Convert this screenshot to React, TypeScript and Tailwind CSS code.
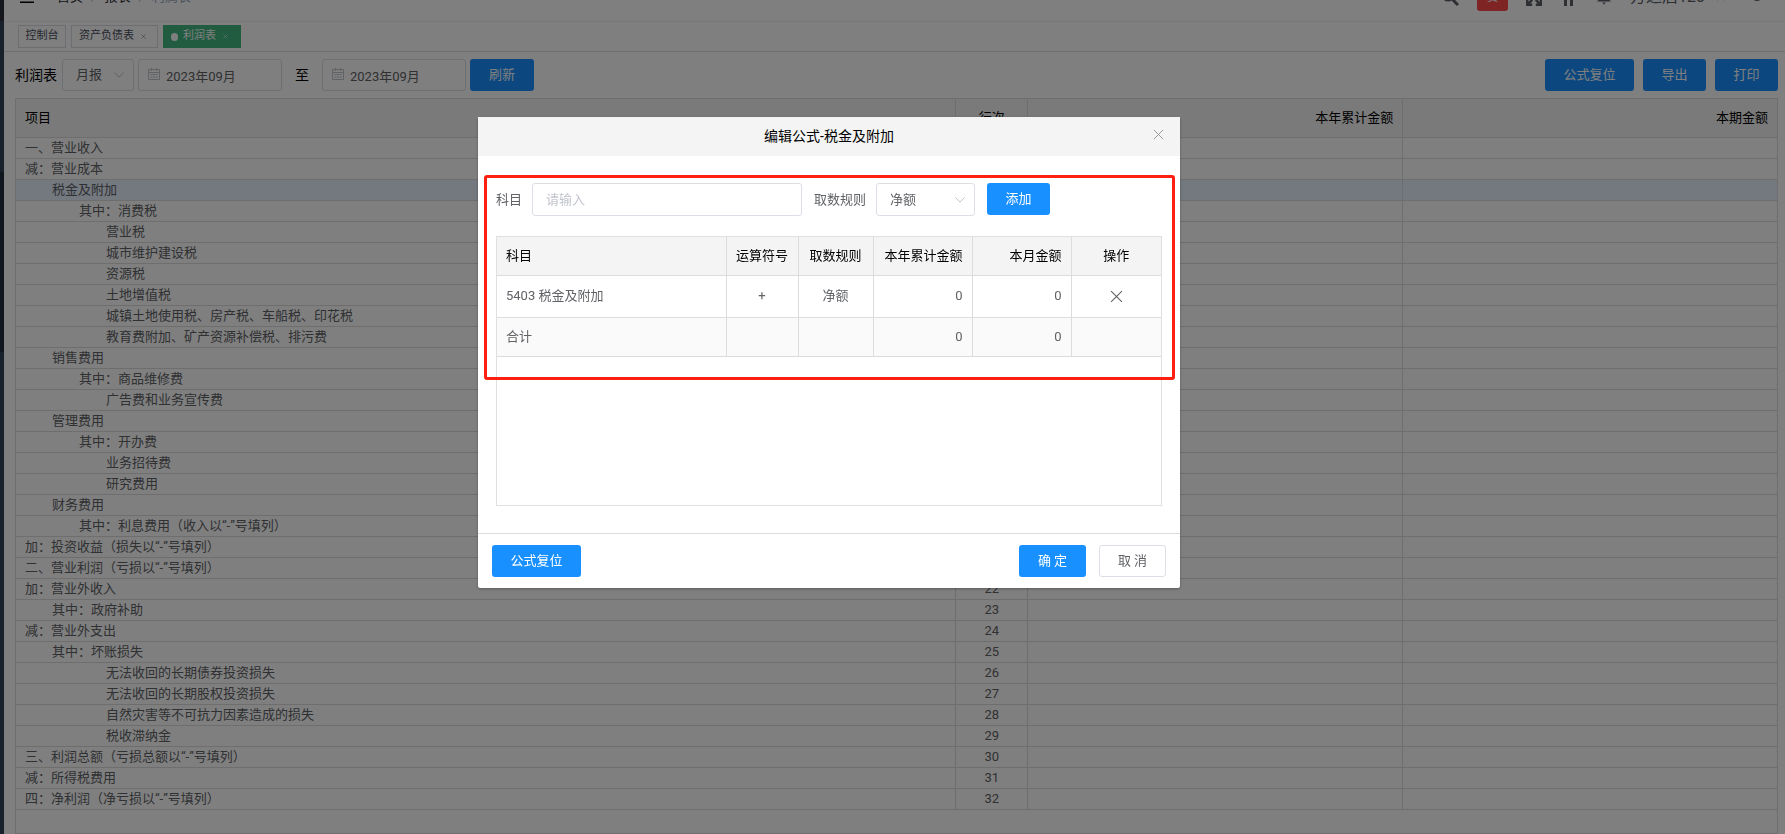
import React from "react";

const rows: [string, number][] = [
    ["一、营业收入", 0],
    ["减：营业成本", 0],
    ["税金及附加", 1],
    ["其中：消费税", 2],
    ["营业税", 3],
    ["城市维护建设税", 3],
    ["资源税", 3],
    ["土地增值税", 3],
    ["城镇土地使用税、房产税、车船税、印花税", 3],
    ["教育费附加、矿产资源补偿税、排污费", 3],
    ["销售费用", 1],
    ["其中：商品维修费", 2],
    ["广告费和业务宣传费", 3],
    ["管理费用", 1],
    ["其中：开办费", 2],
    ["业务招待费", 3],
    ["研究费用", 3],
    ["财务费用", 1],
    ["其中：利息费用（收入以“-”号填列）", 2],
    ["加：投资收益（损失以“-”号填列）", 0],
    ["二、营业利润（亏损以“-”号填列）", 0],
    ["加：营业外收入", 0],
    ["其中：政府补助", 1],
    ["减：营业外支出", 0],
    ["其中：坏账损失", 1],
    ["无法收回的长期债券投资损失", 3],
    ["无法收回的长期股权投资损失", 3],
    ["自然灾害等不可抗力因素造成的损失", 3],
    ["税收滞纳金", 3],
    ["三、利润总额（亏损总额以“-”号填列）", 0],
    ["减：所得税费用", 0],
    ["四：净利润（净亏损以“-”号填列）", 0],
];

const indents = ["pl-[9px]", "pl-9", "pl-[63px]", "pl-[90px]"];

const Chevron = () => (
    <svg viewBox="0 0 12 12" className="pointer-events-none absolute right-[9px] top-1/2 w-3 h-3 -translate-y-1/2" fill="none" stroke="#c0c4cc">
        <path d="M1.5 3.5 6 8.2 10.5 3.5" />
    </svg>
);

const Cross = ({ className }: { className: string }) => (
    <svg viewBox="0 0 12 12" className={className} fill="none" stroke="currentColor">
        <path d="M1 1 11 11M11 1 1 11" />
    </svg>
);

const PrimaryButton = ({ children, className }: { children: React.ReactNode; className: string }) => (
    <button type="button" className={`h-8 rounded-[3px] bg-[#1890ff] text-white text-[13px] ${className}`}>
        {children}
    </button>
);

const DateInput = ({ label }: { label: string }) => (
    <div className="relative w-36">
        <svg viewBox="0 0 12 12" className="absolute left-[10px] top-[9px] w-3 h-3" fill="none" stroke="#c0c4cc">
            <path d="M.5 1.5h11v10H.5zM.5 4.5h11M3.5 0v3M8.5 0v3M2.5 6.5h2M5 6.5h2M7.5 6.5h2M2.5 9h2M5 9h2M7.5 9h2" />
        </svg>
        <input aria-label={label} defaultValue="2023年09月" className="block w-full h-8 rounded-[3px] border border-[#dcdfe6] bg-transparent pl-[27px] pr-2 text-[13px] text-[#606266]" />
    </div>
);

const Navbar = () => (
    <header className="-mt-7 flex h-[50px] shrink-0 items-center justify-between border-b border-[#f0f1f2] pl-4 pr-5">
        <div className="flex items-center">
            <button type="button" aria-label="菜单" className="w-[14px]">
                <svg viewBox="0 0 14 12" className="w-[14px] h-3" stroke="#000" strokeWidth="1.5">
                    <path d="M0 1h14M0 6h14M0 11.2h14" />
                </svg>
            </button>
            <nav className="ml-[23px] flex gap-2 text-[13px] text-[#303133]">
                <a href="#home">首页</a>
                <span className="text-[#c0c4cc]">/</span>
                <a href="#report">报表</a>
                <span className="text-[#c0c4cc]">/</span>
                <span className="text-[#97a8be]">利润表</span>
            </nav>
        </div>
        <div className="flex items-center text-[#5a5e66]">
            <svg viewBox="0 0 18 18" className="w-[18px] h-[18px]" fill="none" stroke="currentColor" strokeWidth="3">
                <circle cx="7" cy="7" r="5" />
                <path d="m11 11 6 6" />
            </svg>
            <button type="button" className="ml-[18px] h-7 w-[31px] rounded-[3px] bg-[#ff4949] text-[12px] text-white">赞</button>
            <svg viewBox="0 0 16 18" className="ml-[18px] w-4 h-[18px]" fill="none" stroke="currentColor" strokeWidth="2.5">
                <path d="M1.2 7V1.200h5M1.200 1.200l5 5M9.800 1.200h5V7M14.800 1.200l-5 5M1.200 11v5.800h5M1.200 16.800l5-5M14.800 11v5.800h-5M14.800 16.800l-5-5" />
            </svg>
            <svg viewBox="0 0 18 18" className="ml-[18px] w-[18px] h-[18px]" fill="none" stroke="currentColor" strokeWidth="3">
                <path d="M1 2h16M5.500 2v16M11.500 2v16" />
            </svg>
            <svg viewBox="0 0 16 16" className="ml-[18px] w-4 h-4" fill="currentColor">
                <path d="M8 0C5 0 3.500 2.500 3.500 5v5L1 12.500h14L12.500 10V5C12.500 2.500 11 0 8 0ZM6 13.500h4l-2 2Z" />
            </svg>
            <span className="ml-[18px] text-[16px]">方达后123</span>
            <Cross className="ml-3 w-2 h-2" />
            <svg viewBox="0 0 16 16" className="ml-6 w-4 h-4" fill="none" stroke="currentColor" strokeWidth="2">
                <circle cx="8" cy="6" r="5" />
            </svg>
        </div>
    </header>
);

const TagsView = () => (
    <div className="flex h-[30px] shrink-0 items-center gap-[5px] border-b border-[#d8dce5] pl-[14px] text-[11px] text-[#495060]">
        <a href="#console" className="flex h-[23px] w-12 items-center justify-center border border-[#d8dce5]">控制台</a>
        <a href="#balance" className="flex h-[23px] w-[87px] items-center border border-[#d8dce5] pl-[7px]">
            资产负债表
            <Cross className="ml-[7px] w-[5px] h-[5px]" />
        </a>
        <a href="#profit" className="flex h-[23px] w-[78px] items-center bg-[#42b983] pl-2 text-white">
            <span className="mr-[5px] w-[7px] h-2 rounded-full bg-white" />
            利润表
            <Cross className="ml-[7px] w-[5px] h-[5px]" />
        </a>
    </div>
);

const Toolbar = () => (
    <div className="flex shrink-0 items-center pl-[11px] pr-[7px] pt-[7px] text-[14px] text-black">
        <label htmlFor="period">利润表</label>
        <div className="relative ml-[5px] mr-1 w-[72px]">
            <select id="period" className="block w-full h-8 appearance-none rounded-[3px] border border-[#dcdfe6] bg-transparent pl-[13px] text-[13px] text-[#606266]">
                <option>月报</option>
            </select>
            <Chevron />
        </div>
        <DateInput label="开始月份" />
        <span className="mx-[13px]">至</span>
        <DateInput label="结束月份" />
        <PrimaryButton className="ml-1 w-16">刷新</PrimaryButton>
        <div className="ml-auto flex gap-[9px]">
            <PrimaryButton className="w-[89px]">公式复位</PrimaryButton>
            <PrimaryButton className="w-[63px]">导出</PrimaryButton>
            <PrimaryButton className="w-[63px]">打印</PrimaryButton>
        </div>
    </div>
);

const ProfitTable = () => (
    <div className="ml-[11px] mr-[7px] mt-[7px] flex-1 border border-[#dcdcdc] text-[13px] text-[#606266]">
        <table className="w-full table-fixed border-collapse">
            <thead>
                <tr className="h-[38px] border-b border-[#dcdcdc] bg-[#f4f4f4] text-black">
                    <th className="px-[9px] text-left font-normal">项目</th>
                    <th className="w-[72px] border-l border-[#dcdcdc] font-normal">行次</th>
                    <th className="w-[21.3%] border-l border-[#dcdcdc] px-[9px] text-right font-normal">本年累计金额</th>
                    <th className="w-[21.25%] border-l border-[#dcdcdc] px-[9px] text-right font-normal">本期金额</th>
                </tr>
            </thead>
            <tbody>
                {rows.map(([name, level], i) => (
                    <tr key={name} className={`h-[21px] border-b border-[#dcdcdc] leading-5 ${i === 2 ? "bg-[#e8f1ff]" : ""}`}>
                        <td className={`p-0 ${indents[level]}`}>{name}</td>
                        <td className="border-l border-[#dcdcdc] p-0 text-center">{i + 1}</td>
                        <td className="border-l border-[#dcdcdc] p-0" />
                        <td className="border-l border-[#dcdcdc] p-0" />
                    </tr>
                ))}
            </tbody>
        </table>
    </div>
);

const FormulaDialog = () => (
    <div role="dialog" aria-label="编辑公式" className="relative w-[702px] rounded-[2px] bg-white text-[13px] text-[#606266] shadow-[0_1px_3px_rgba(0,0,0,0.3)]">
        <div className="relative flex h-[39px] items-center justify-center bg-[#f4f4f4]">
            <h2 className="text-[14px] text-black">编辑公式-税金及附加</h2>
            <button type="button" aria-label="关闭" className="absolute right-4 top-3 text-[#909399]">
                <Cross className="w-[11px] h-[11px]" />
            </button>
        </div>

        <div className="px-[18px] pt-[27px] pb-[27px]">
            {/* Add form */}
            <div className="flex items-center">
                <label htmlFor="subject">科目</label>
                <input id="subject" placeholder="请输入" className="ml-[10px] w-[270px] h-[33px] rounded-[3px] border border-[#dcdfe6] px-[13px] placeholder:text-[#c0c4cc]" />
                <label htmlFor="rule" className="ml-3">取数规则</label>
                <div className="relative ml-[10px] w-[99px]">
                    <select id="rule" className="block w-full h-[33px] appearance-none rounded-[3px] border border-[#dcdfe6] bg-white pl-[13px]">
                        <option>净额</option>
                    </select>
                    <Chevron />
                </div>
                <PrimaryButton className="ml-3 w-[63px] self-start">添加</PrimaryButton>
            </div>

            <div className="mt-5 h-[270px] border border-[#dfdfe4]">
                <table className="w-full table-fixed border-collapse">
                    <thead>
                        <tr className="h-[38px] border-b border-[#dcdcdc] bg-[#f4f4f4] text-black">
                            <th className="px-[9px] text-left font-normal">科目</th>
                            <th className="w-[72px] border-l border-[#dcdcdc] font-normal">运算符号</th>
                            <th className="w-[75px] border-l border-[#dcdcdc] font-normal">取数规则</th>
                            <th className="w-[99px] border-l border-[#dcdcdc] px-[9px] text-right font-normal">本年累计金额</th>
                            <th className="w-[99px] border-l border-[#dcdcdc] px-[9px] text-right font-normal">本月金额</th>
                            <th className="w-[90px] border-l border-[#dcdcdc] font-normal">操作</th>
                        </tr>
                    </thead>
                    <tbody>
                        <tr className="h-[42px] border-b border-[#dcdcdc]">
                            <td className="px-[9px]">5403 税金及附加</td>
                            <td className="border-l border-[#dcdcdc] text-center">+</td>
                            <td className="border-l border-[#dcdcdc] text-center">净额</td>
                            <td className="border-l border-[#dcdcdc] px-[9px] text-right">0</td>
                            <td className="border-l border-[#dcdcdc] px-[9px] text-right">0</td>
                            <td className="border-l border-[#dcdcdc]">
                                <button type="button" aria-label="删除" className="mx-auto block">
                                    <Cross className="w-[13px] h-[13px]" />
                                </button>
                            </td>
                        </tr>
                        <tr className="h-[39px] border-b border-[#dcdcdc] bg-[#fafafa]">
                            <td className="px-[9px]">合计</td>
                            <td className="border-l border-[#dcdcdc]" />
                            <td className="border-l border-[#dcdcdc]" />
                            <td className="border-l border-[#dcdcdc] px-[9px] text-right">0</td>
                            <td className="border-l border-[#dcdcdc] px-[9px] text-right">0</td>
                            <td className="border-l border-[#dcdcdc]" />
                        </tr>
                    </tbody>
                </table>
            </div>
        </div>

        <div className="flex h-[55px] items-center border-t border-[#dcdcdc] px-[14px]">
            <PrimaryButton className="w-[89px]">公式复位</PrimaryButton>
            <PrimaryButton className="ml-auto w-[67px]">确 定</PrimaryButton>
            <button type="button" className="ml-[13px] h-8 w-[67px] rounded-[3px] border border-[#dcdfe6] bg-white">取 消</button>
        </div>

        {/* Highlight frame */}
        <div className="pointer-events-none absolute left-[6px] right-[5px] top-[58px] h-[205px] rounded-[3px] border-3 border-[#ff2012]" />
    </div>
);

export default function App() {
    return (
        <div className="relative flex h-screen overflow-hidden bg-white font-['Roboto','Noto_Sans_CJK_SC',sans-serif]">
            <aside className="flex w-1 shrink-0 flex-col bg-[#304156]">
                <div className="h-[21px] bg-[#2b2f3a]" />
                <div className="mt-[151px] h-[180px] bg-[#1f2d3d]" />
            </aside>
            <main className="flex min-w-0 flex-1 flex-col">
                <Navbar />
                <TagsView />
                <Toolbar />
                <ProfitTable />
            </main>
            <div className="fixed inset-0 flex items-start justify-center bg-black/50 pt-[117px] pr-[127px]">
                <FormulaDialog />
            </div>
        </div>
    );
}
